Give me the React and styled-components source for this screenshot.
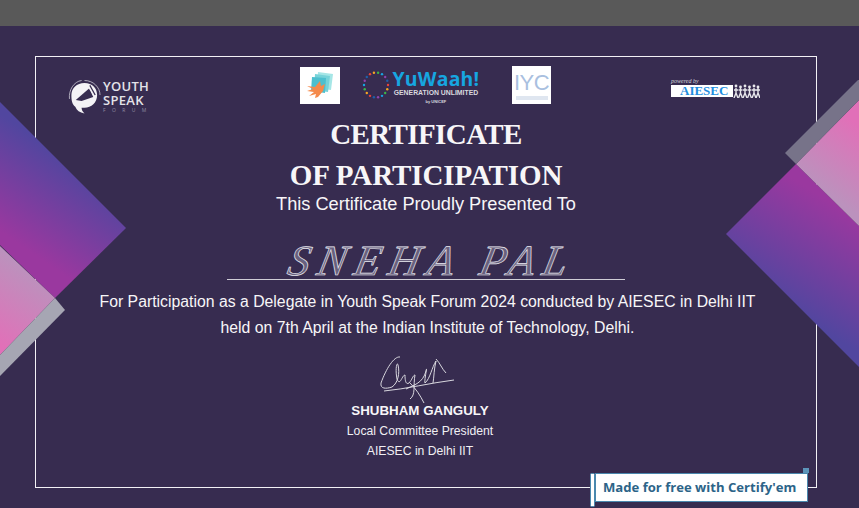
import React from "react";
import styled, { createGlobalStyle } from "styled-components";

const Global = createGlobalStyle`
  html, body { margin: 0; padding: 0; background: #372c50; }
  * { box-sizing: border-box; }
`;

const Page = styled.div`
  width: 859px;
  height: 508px;
  overflow: hidden;
  display: flex;
  flex-direction: column;
  font-family: "Liberation Sans", Arial, sans-serif;
`;
const TopBar = styled.div`
  height: 26px;
  flex: none;
  background: #595959;
`;
const Certificate = styled.main`
  flex: 1;
  position: relative;
  background: #372c50;
  padding: 30px 42px 20px 35px;
  color: #fff;
`;
const Frame = styled.section`
  height: 432px;
  border: 1px solid #f2f1f5;
  display: flex;
  flex-direction: column;
  align-items: center;
`;
const Decor = styled.svg`
  position: absolute;
  top: 54px;
  ${(p) => (p.$side === "left" ? "left: 0;" : "right: 0;")}
`;
const LogoRow = styled.div`
  width: 100%;
  height: 38px;
  margin-top: 9px;
  padding-left: 32px;
  display: flex;
  align-items: flex-start;
`;
const YouthSpeak = styled.div`
  width: 232px;
  margin-top: 13px;
  display: flex;
  align-items: flex-start;
  gap: 2px;
`;
const YouthWords = styled.div`
  display: flex;
  flex-direction: column;
  color: #e4e3e9;
  font-family: "Open Sans", sans-serif;
  font-weight: 600;
  font-size: 13px;
  line-height: 14px;
  letter-spacing: 0.3px;
`;
const ForumWord = styled.span`
  font-size: 5px;
  line-height: 7px;
  letter-spacing: 6.4px;
  color: #8f8aa0;
  font-weight: 400;
`;
const WhiteLogo = styled.div`
  width: ${(p) => p.$w}px;
  height: ${(p) => p.$h}px;
  margin-top: ${(p) => p.$top || 0}px;
  flex: none;
  background: #fff;
  display: flex;
  flex-direction: column;
  align-items: center;
  justify-content: center;
`;
const YuWaah = styled.div`
  width: 172px;
  padding-left: 22px;
  margin-top: 4px;
  display: flex;
  align-items: flex-start;
  gap: 1px;
`;
const YuWords = styled.div`
  margin-top: -2px;
  display: flex;
  flex-direction: column;
  align-items: center;
`;
const YuName = styled.span`
  color: #16a6e0;
  font-family: "Open Sans", sans-serif;
  font-weight: 700;
  font-size: 19.4px;
  line-height: 21px;
  letter-spacing: 0.2px;
`;
const YuSub = styled.span`
  color: #d9d8df;
  font-family: "Liberation Sans", sans-serif;
  font-weight: 700;
  font-size: 7.3px;
  line-height: 8.5px;
  transform: scaleX(0.94);
  white-space: nowrap;
`;
const YuBy = styled.span`
  color: #d9d8df;
  font-weight: 700;
  font-size: 4px;
  line-height: 7px;
`;
const Iyc = styled.span`
  color: #a9c0df;
  font-family: "Liberation Sans", sans-serif;
  font-size: 22px;
  line-height: 25px;
  letter-spacing: -0.5px;
`;
const IycCaption = styled.span`
  width: 32px;
  height: 4px;
  margin-top: 1px;
  background: #dfe6f0;
`;
const Aiesec = styled.div`
  margin-left: 120px;
  margin-top: 12px;
  display: flex;
  flex-direction: column;
  width: 90px;
`;
const PoweredBy = styled.span`
  font-family: "Liberation Serif", serif;
  font-style: italic;
  font-size: 6px;
  line-height: 7px;
  color: #d6d5dc;
`;
const AiesecBar = styled.div`
  display: flex;
  align-items: center;
  height: 12px;
`;
const AiesecName = styled.span`
  width: 62px;
  height: 12px;
  background: #fff;
  color: #1f8ee0;
  font-family: "Liberation Serif", serif;
  font-weight: 700;
  font-size: 13px;
  line-height: 12px;
  padding-left: 9px;
  white-space: nowrap;
`;
const Title = styled.h1`
  margin: 10px 0 0;
  font-family: "Liberation Serif", serif;
  font-weight: 700;
  font-size: 29px;
  line-height: 41px;
  text-align: center;
  color: #f7f6f8;
`;
const TitleLine = styled.span`
  display: block;
  letter-spacing: ${(p) => p.$spacing}px;
`;
const Subtitle = styled.p`
  margin: -1px 0 0;
  font-size: 18.2px;
  line-height: 18px;
  color: #f7f6f8;
`;
const NameLine = styled.div`
  width: 398px;
  height: 66px;
  margin-top: 1px;
  padding: 25px 0 0 12px;
  border-bottom: 1px solid #cfcdd6;
  text-align: center;
  font-family: "Liberation Serif", serif;
  font-style: italic;
  font-size: 43px;
  line-height: 44px;
  letter-spacing: 8px;
  color: rgba(230, 230, 240, 0.3);
  -webkit-text-stroke: 0.7px #e9e9f0;
  white-space: nowrap;
`;
const NameText = styled.span`
  display: inline-block;
  transform: skewX(-12deg);
`;
const Body = styled.p`
  margin: 9px 0 0 3px;
  font-size: 15.8px;
  line-height: 26px;
  text-align: center;
  color: #f7f6f8;
  white-space: nowrap;
`;
const SignerBlock = styled.div`
  margin-right: 12px;
  display: flex;
  flex-direction: column;
  align-items: center;
`;
const Signature = styled.svg`
  margin: 12px 7px 0 0;
  flex: none;
`;
const SignerName = styled.div`
  font-size: 13.35px;
  font-weight: 700;
  line-height: 20px;
  margin-top: -4px;
  color: #f7f6f8;
`;
const SignerLine = styled.div`
  font-size: 12.2px;
  line-height: 20px;
  color: #f0eff3;
`;
const Badge = styled.div`
  position: absolute;
  left: 595px;
  top: 447px;
  width: 213px;
  height: 29px;
  background: #fff;
  border: 1.5px solid #4a88ae;
  color: #2c6488;
  font-family: "Open Sans", sans-serif;
  font-weight: 700;
  font-size: 13.1px;
  line-height: 26px;
  padding-left: 7px;
  white-space: nowrap;
`;
const BadgeTab = styled.span`
  position: absolute;
  left: -6.5px;
  top: -1.5px;
  width: 5.5px;
  height: 34px;
  background: #fff;
  border: 1px solid #4a88ae;
  border-radius: 1.5px;
`;
const BadgeCap = styled.span`
  position: absolute;
  right: -1.5px;
  top: -6px;
  width: 6px;
  height: 5px;
  background: #5c95ba;
`;

const Swatch = () => (
  <svg width="40" height="37" viewBox="0 0 40 37">
    <path d="M18 5 L33 7 L31 23 L17 21 Z" fill="#a6e6e6" />
    <path d="M15 7 L30 9 L28 25 L14 23 Z" fill="#77d3d9" />
    <path d="M12 10 L26 11 L25 26 L11 24 Z" fill="#4dbfce" />
    <path d="M7 19 L15 20 L20 14 L21 19 L25 17 L23 24 L18 30 L15 31 L16 27 L9 29 L14 25 L7 24 L13 22 Z" fill="#f58a4b" />
  </svg>
);

const COLORS = ["#e8443a", "#f6a623", "#3ab54a", "#16a6e0", "#8e44ad", "#1f5fa8"];
const Ring = () => (
  <svg width="28" height="30" viewBox="0 0 28 30">
    {Array.from({ length: 18 }).map((_, i) => {
      const a = (i / 18) * Math.PI * 2;
      return <circle key={i} cx={14 + 12 * Math.cos(a)} cy={15 + 12.5 * Math.sin(a)} r="1.2" fill={COLORS[i % 6]} />;
    })}
  </svg>
);

const Bubble = () => (
  <svg width="33" height="36" viewBox="0 0 34 36">
    <path d="M17 3.5 C25 3.5 30 9 30 16 C30 24 24 29 17 29 L14 29 C14 31 15 33 17 35 C12 34 9 32 7.5 28 C4 25.5 3.5 21 3.5 16 C3.5 9 9 3.5 17 3.5 Z" fill="#f4f3f6" />
    <path d="M17 1 C26 1 33 8 33 16 M1.5 20 C0.5 11 6 2 14 1" fill="none" stroke="#cfcdd8" strokeWidth="0.8" />
    <path d="M8 21 L22 9 L26 18 L14 22 Z" fill="#372c50" />
    <path d="M21 7 L27 17" stroke="#f4f3f6" strokeWidth="1.3" />
    <path d="M22.5 6 L28 16" stroke="#372c50" strokeWidth="1.3" />
  </svg>
);

const People = () => (
  <svg width="27" height="14" viewBox="0 0 27 14">
    {[3, 7.5, 12, 16.5, 21, 25].map((x, i) => (
      <g key={x} stroke="#e8e7ec" strokeWidth="1.4" fill="none">
        <circle cx={x} cy={i % 2 ? 3 : 2} r="1.4" fill="#e8e7ec" stroke="none" />
        <path d={`M${x} 4 L${x} 9 M${x} 9 L${x - 2} 14 M${x} 9 L${x + 2} 14 M${x - 2} 6 L${x + 2} 6`} />
      </g>
    ))}
  </svg>
);

const LeftDecor = () => (
  <Decor $side="left" width="140" height="320" viewBox="0 80 140 320">
    <defs>
      <linearGradient id="lp" gradientUnits="userSpaceOnUse" x1="75" y1="165" x2="20" y2="245">
        <stop offset="0" stopColor="#51469f" />
        <stop offset="1" stopColor="#9a389f" />
      </linearGradient>
      <linearGradient id="lk" gradientUnits="userSpaceOnUse" x1="45" y1="280" x2="0" y2="345">
        <stop offset="0" stopColor="#bb92bd" />
        <stop offset="1" stopColor="#e170b8" />
      </linearGradient>
    </defs>
    <path d="M0 102 L126 228 L55 298 L0 245 Z" fill="url(#lp)" />
    <path d="M0 246 L55 298 L0 355 Z" fill="url(#lk)" />
    <path d="M55 298 L65 310 L0 376 L0 355 Z" fill="#a6a6b3" />
  </Decor>
);

const RightDecor = () => (
  <Decor $side="right" width="140" height="320" viewBox="719 80 140 320">
    <defs>
      <linearGradient id="rp" gradientUnits="userSpaceOnUse" x1="775" y1="300" x2="835" y2="205">
        <stop offset="0" stopColor="#51469f" />
        <stop offset="1" stopColor="#9a389f" />
      </linearGradient>
      <linearGradient id="rk" gradientUnits="userSpaceOnUse" x1="815" y1="185" x2="859" y2="125">
        <stop offset="0" stopColor="#bb92bd" />
        <stop offset="1" stopColor="#e170b8" />
      </linearGradient>
    </defs>
    <path d="M859 367 L726 234 L796 164 L859 226 Z" fill="url(#rp)" />
    <path d="M796 164 L859 100 L859 226 Z" fill="url(#rk)" />
    <path d="M785 153 L859 79 L859 100 L796 164 Z" fill="#777389" />
  </Decor>
);

export default function App() {
  return (
    <Page>
      <Global />
      <TopBar />
      <Certificate>
        <Frame>
          <LogoRow>
            <YouthSpeak>
              <Bubble />
              <YouthWords>
                <span>YOUTH</span>
                <span>SPEAK</span>
                <ForumWord>FORUM</ForumWord>
              </YouthWords>
            </YouthSpeak>
            <WhiteLogo $w={40} $h={37} $top={1}><Swatch /></WhiteLogo>
            <YuWaah>
              <Ring />
              <YuWords>
                <YuName>YuWaah!</YuName>
                <YuSub>GENERATION UNLIMITED</YuSub>
                <YuBy>by UNICEF</YuBy>
              </YuWords>
            </YuWaah>
            <WhiteLogo $w={39} $h={38}><Iyc>IYC</Iyc><IycCaption /></WhiteLogo>
            <Aiesec>
              <PoweredBy>powered by</PoweredBy>
              <AiesecBar>
                <AiesecName>AIESEC</AiesecName>
                <People />
              </AiesecBar>
            </Aiesec>
          </LogoRow>
          <Title>
            <TitleLine $spacing={-0.6}>CERTIFICATE</TitleLine>
            <TitleLine $spacing={-0.1}>OF PARTICIPATION</TitleLine>
          </Title>
          <Subtitle>This Certificate Proudly Presented To</Subtitle>
          <NameLine><NameText>SNEHA PAL</NameText></NameLine>
          <Body>
            For Participation as a Delegate in Youth Speak Forum 2024 conducted by AIESEC in Delhi IIT<br />
            held on 7th April at the Indian Institute of Technology, Delhi.
          </Body>
          <SignerBlock>
            <Signature width="76" height="52" viewBox="0 0 76 52">
              <path d="M22 4 C16 3 8 16 3 30 C2 36 8 36 14 34 C20 30 22 20 20 12 C19 8 17 16 19 26 C22 34 24 22 27 22 C27 28 28 32 31 30 C34 27 35 22 37 22 C35 32 38 42 32 46 M28 36 C36 32 45 30 48 18 C50 10 46 28 47 30 C52 26 54 14 58 8 C56 16 56 24 55 30 M58 6 C62 10 64 16 68 20 M6 38 C28 36 52 30 76 27 M32 30 C38 36 42 42 46 50" fill="none" stroke="#d8d7de" strokeWidth="1" />
            </Signature>
            <SignerName>SHUBHAM GANGULY</SignerName>
            <SignerLine>Local Committee President</SignerLine>
            <SignerLine>AIESEC in Delhi IIT</SignerLine>
          </SignerBlock>
        </Frame>
        <LeftDecor />
        <RightDecor />
        <Badge>
          <BadgeTab />
          <BadgeCap />
          Made for free with Certify'em
        </Badge>
      </Certificate>
    </Page>
  );
}
